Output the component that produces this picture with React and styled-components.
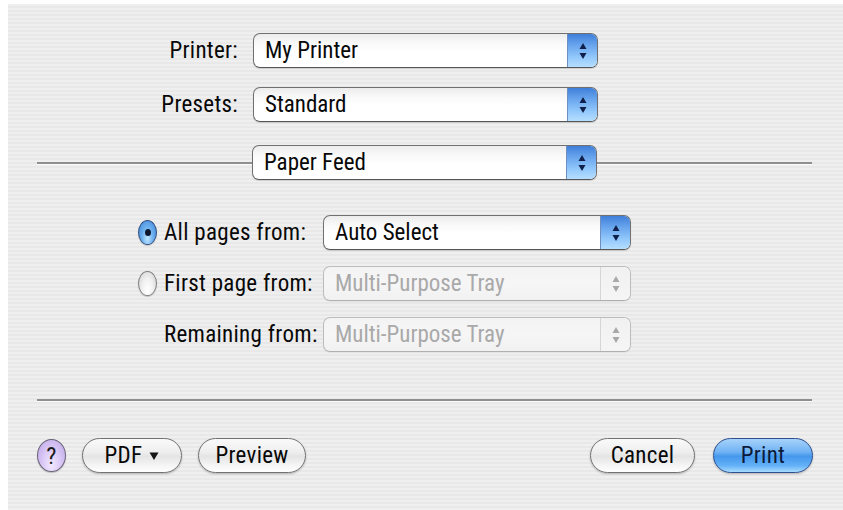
import React from "react";
import styled, { createGlobalStyle } from "styled-components";

const FONT = `"Roboto Condensed", "Liberation Sans", sans-serif`;

const GlobalStyle = createGlobalStyle`
  html, body { margin: 0; padding: 0; background: #ffffff; }
  body { font-family: ${FONT}; }
`;

const Dialog = styled.div`
  margin: 4px 0 0 8px;
  width: 835px;
  height: 506px;
  box-sizing: border-box;
  background: repeating-linear-gradient(
    to bottom,
    #efefef 0px,
    #efefef 2px,
    #e8e8e8 2px,
    #e8e8e8 4px
  );
  display: flex;
  flex-direction: column;
  font-family: ${FONT};
  font-size: 23px;
  font-weight: 400;
  letter-spacing: 0.3px;
  color: #080808;
`;

const TopSection = styled.div`
  display: flex;
  flex-direction: column;
  padding-top: 29px;
`;

const FieldRow = styled.div`
  display: flex;
  align-items: center;
  height: 35px;
  margin-top: ${(p) => p.mt || 0}px;
`;

const FieldLabel = styled.span`
  width: 230px;
  margin-right: 15px;
  text-align: right;
  white-space: nowrap;
`;

const DividerRow = styled.div`
  display: flex;
  align-items: center;
  height: 35px;
  margin-top: 23px;
  padding: 0 31px 0 29px;
`;

const Rule = styled.div`
  flex: 1;
  height: 2px;
  background: #8f8f8f;
  box-shadow: 0 1px 0 #fbfbfb;
`;

const SourceSection = styled.div`
  display: flex;
  flex-direction: column;
  gap: 16px;
  margin-top: 35px;
  padding-left: 130px;
`;

const SourceRow = styled.div`
  display: flex;
  align-items: center;
  height: 35px;
`;

const RadioSlot = styled.span`
  width: 19px;
  display: flex;
  align-items: center;
`;

const Radio = styled.span`
  display: inline-flex;
  align-items: center;
  justify-content: center;
  width: 19px;
  height: 25px;
  box-sizing: border-box;
  border-radius: 50%;
  border: 1px solid ${(p) => (p.checked ? "#2f4d7c" : "#7d7d7d")};
  background: ${(p) =>
    p.checked
      ? "radial-gradient(ellipse at 50% 75%, #bfe6ff 0%, #6fb2f0 45%, #3a7fd6 100%)"
      : "radial-gradient(ellipse at 50% 80%, #ffffff 0%, #f1f1f1 45%, #cfcfcf 100%)"};
  box-shadow: 0 1px 1px rgba(0, 0, 0, 0.18);
`;

const RadioDot = styled.span`
  width: 6px;
  height: 7px;
  border-radius: 50%;
  background: #0e1730;
`;

const SourceLabel = styled.span`
  width: 159px;
  margin-left: 7px;
  text-align: left;
  white-space: nowrap;
`;

const PopupBox = styled.div`
  display: flex;
  align-items: stretch;
  width: ${(p) => p.w}px;
  height: 35px;
  box-sizing: border-box;
  border: 1px solid ${(p) => (p.disabled ? "#bcbcbc" : "#707070")};
  border-bottom-color: ${(p) => (p.disabled ? "#b0b0b0" : "#555555")};
  border-radius: 7px;
  overflow: hidden;
  background: ${(p) =>
    p.disabled
      ? "linear-gradient(#f3f3f3, #f6f6f6 50%, #f1f1f1)"
      : "linear-gradient(#ececec 0%, #fafafa 30%, #ffffff 55%, #ffffff 100%)"};
  box-shadow: 0 1px 1px rgba(0, 0, 0, ${(p) => (p.disabled ? 0.05 : 0.15)});
`;

const PopupValue = styled.span`
  flex: 1;
  display: flex;
  align-items: center;
  padding-left: 11px;
  letter-spacing: 0;
  color: ${(p) => (p.disabled ? "#a9a9a9" : "#080808")};
  white-space: nowrap;
`;

const Stepper = styled.span`
  width: 29px;
  display: flex;
  align-items: center;
  justify-content: center;
  border-left: 1px solid ${(p) => (p.disabled ? "#d6d6d6" : "#6e8fc0")};
  background: ${(p) =>
    p.disabled
      ? "linear-gradient(#f1f1f1, #f5f5f5)"
      : "linear-gradient(#3f7fd9 0%, #6aa6ee 35%, #92c8fb 70%, #b6defe 100%)"};
`;

const ButtonBar = styled.div`
  display: flex;
  align-items: center;
  margin-top: 37px;
  padding: 0 30px 0 29px;
`;

const BottomRule = styled.div`
  margin: 47px 31px 0 29px;
  height: 2px;
  background: #8f8f8f;
  box-shadow: 0 1px 0 #fbfbfb;
`;

const HelpButton = styled.span`
  width: 29px;
  height: 33px;
  box-sizing: border-box;
  border-radius: 50%;
  border: 1px solid #6a6478;
  background: radial-gradient(
    ellipse at 50% 80%,
    #f2e8ff 0%,
    #dccaf7 45%,
    #b9a3e4 100%
  );
  display: flex;
  align-items: center;
  justify-content: center;
  font-size: 24px;
  color: #1c1c1c;
  margin-right: 16px;
  box-shadow: 0 1px 1px rgba(0, 0, 0, 0.2);
`;

const Pill = styled.button`
  width: ${(p) => p.w}px;
  height: 35px;
  margin-right: ${(p) => p.mr || 0}px;
  padding: 0;
  box-sizing: border-box;
  border-radius: 18px;
  border: 1px solid ${(p) => (p.primary ? "#2d4f8e" : "#727272")};
  background: ${(p) =>
    p.primary
      ? "linear-gradient(#a7d2fb 0%, #6eb2f3 40%, #4497ec 52%, #62b0f7 80%, #a9dcff 100%)"
      : "linear-gradient(#fafafa 0%, #eeeeee 40%, #e4e4e4 52%, #f5f5f5 80%, #ffffff 100%)"};
  box-shadow: 0 1px 2px rgba(0, 0, 0, 0.25);
  font-family: ${FONT};
  font-size: 23px;
  font-weight: 400;
  letter-spacing: 0.3px;
  color: ${(p) => (p.primary ? "#0b1a3a" : "#080808")};
  display: inline-flex;
  align-items: center;
  justify-content: center;
  gap: 7px;
`;

const Spacer = styled.span`
  flex: 1;
`;

function Arrows({ disabled }) {
  const c = disabled ? "#a8a8a8" : "#10204a";
  return (
    <svg width="10" height="20" viewBox="0 0 10 20">
      <path d="M5 2 L8.5 8 L1.5 8 Z" fill={c} />
      <path d="M5 18 L8.5 12 L1.5 12 Z" fill={c} />
    </svg>
  );
}

function Popup({ value, w, disabled }) {
  return (
    <PopupBox w={w} disabled={disabled}>
      <PopupValue disabled={disabled}>{value}</PopupValue>
      <Stepper disabled={disabled}>
        <Arrows disabled={disabled} />
      </Stepper>
    </PopupBox>
  );
}

function DownTriangle() {
  return (
    <svg width="10" height="10" viewBox="0 0 10 10">
      <path d="M0.5 1.5 L9.5 1.5 L5 9 Z" fill="#141414" />
    </svg>
  );
}

export default function App() {
  return (
    <>
      <GlobalStyle />
      <Dialog>
        <TopSection>
          <FieldRow>
            <FieldLabel>Printer:</FieldLabel>
            <Popup value="My Printer" w={345} />
          </FieldRow>
          <FieldRow mt={19}>
            <FieldLabel>Presets:</FieldLabel>
            <Popup value="Standard" w={345} />
          </FieldRow>
        </TopSection>
        <DividerRow>
          <Rule />
          <Popup value="Paper Feed" w={345} />
          <Rule />
        </DividerRow>
        <SourceSection>
          <SourceRow>
            <RadioSlot>
              <Radio checked>
                <RadioDot />
              </Radio>
            </RadioSlot>
            <SourceLabel>All pages from:</SourceLabel>
            <Popup value="Auto Select" w={308} />
          </SourceRow>
          <SourceRow>
            <RadioSlot>
              <Radio />
            </RadioSlot>
            <SourceLabel>First page from:</SourceLabel>
            <Popup value="Multi-Purpose Tray" w={308} disabled />
          </SourceRow>
          <SourceRow>
            <RadioSlot />
            <SourceLabel>Remaining from:</SourceLabel>
            <Popup value="Multi-Purpose Tray" w={308} disabled />
          </SourceRow>
        </SourceSection>
        <BottomRule />
        <ButtonBar>
          <HelpButton>?</HelpButton>
          <Pill w={100} mr={16}>
            PDF <DownTriangle />
          </Pill>
          <Pill w={108}>Preview</Pill>
          <Spacer />
          <Pill w={105} mr={18}>
            Cancel
          </Pill>
          <Pill w={100} primary>
            Print
          </Pill>
        </ButtonBar>
      </Dialog>
    </>
  );
}
